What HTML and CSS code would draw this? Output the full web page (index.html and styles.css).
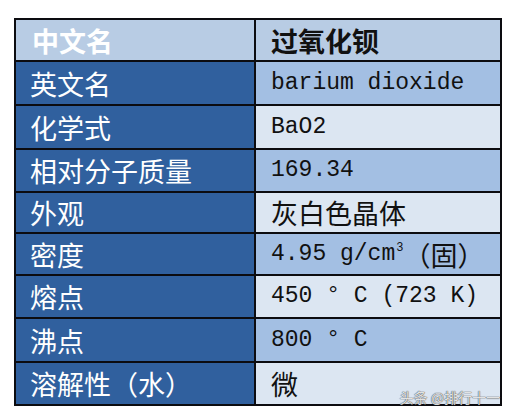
FILE: index.html
```html
<!DOCTYPE html>
<html lang="zh">
<head>
<meta charset="utf-8">
<link rel="stylesheet" href="styles.css">
</head>
<body>
<div class="sheet">
  <div class="grid">
    <div class="cell key head">中文名</div>
    <div class="cell val head">过氧化钡</div>

    <div class="cell key">英文名</div>
    <div class="cell val mid"><span class="lat">barium dioxide</span></div>

    <div class="cell key">化学式</div>
    <div class="cell val light"><span class="lat">BaO2</span></div>

    <div class="cell key">相对分子质量</div>
    <div class="cell val mid"><span class="lat">169.34</span></div>

    <div class="cell key">外观</div>
    <div class="cell val light">灰白色晶体</div>

    <div class="cell key">密度</div>
    <div class="cell val mid"><span class="lat">4.95 g/cm<sup>3</sup> </span>（固）</div>

    <div class="cell key">熔点</div>
    <div class="cell val light"><span class="lat">450 ° C (723 K)</span></div>

    <div class="cell key">沸点</div>
    <div class="cell val mid"><span class="lat">800 ° C</span></div>

    <div class="cell key">溶解性（水）</div>
    <div class="cell val light">微</div>
  </div>
  <div class="mark">头条 @排行十一</div>
</div>
</body>
</html>
```

FILE: styles.css
```css
html, body {
  margin: 0;
  padding: 0;
  background: #ffffff;
}

body {
  width: 512px;
  height: 416px;
  overflow: hidden;
}

.sheet {
  position: relative;
  margin: 18px 0 0 14px;
  width: 488px;
}

.grid {
  display: grid;
  grid-template-columns: 238px 244px;
  grid-template-rows: 40px 42px 42px 41px 39px 40px 41px 42px 41px;
  gap: 2px;
  border: 2px solid #0c0c10;
  background: #0c0c10;
}

.cell {
  display: flex;
  align-items: center;
  font-family: "Noto Sans CJK SC", "Noto Sans", sans-serif;
  font-size: 27px;
  line-height: 1;
  white-space: nowrap;
}

.key {
  background: #30609e;
  color: #ffffff;
  padding-left: 14px;
}

.val {
  color: #111111;
  padding-left: 15px;
}

.head {
  background: #b8cce4;
  font-weight: 700;
}

.key.head {
  color: #ffffff;
  padding-left: 16px;
}

.mid {
  background: #a3bfe3;
}

.light {
  background: #dce6f2;
}

.lat {
  font-family: "Liberation Mono", "DejaVu Sans Mono", monospace;
  font-size: 23px;
}

.lat sup {
  font-size: 12px;
  vertical-align: 9px;
  margin-left: 1px;
}

.mark {
  position: absolute;
  right: 2px;
  bottom: 1px;
  font-family: "Noto Sans CJK SC", "Noto Sans", sans-serif;
  font-size: 14px;
  line-height: 16px;
  color: rgba(255, 255, 255, 0.85);
  text-shadow: 0 0 1px #444, 0 0 1px #444;
}
```
